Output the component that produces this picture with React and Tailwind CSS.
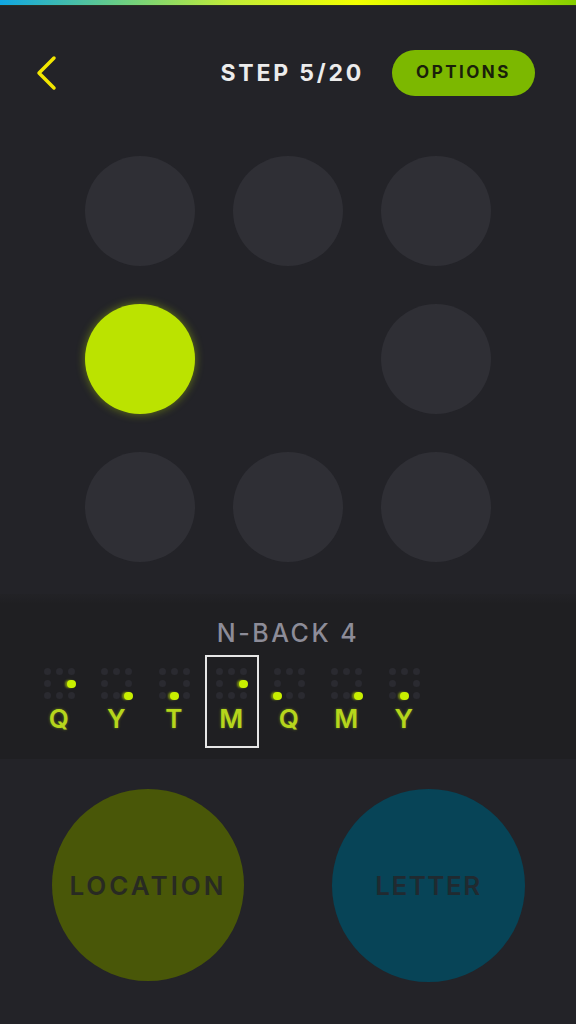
import React from "react";

const font = { fontFamily: "Inter, 'DejaVu Sans', sans-serif" };

const history = [
  { l: "Q", a: 5 },
  { l: "Y", a: 8 },
  { l: "T", a: 7 },
  { l: "M", a: 5, sel: true },
  { l: "Q", a: 6 },
  { l: "M", a: 8 },
  { l: "Y", a: 7 },
];

function MiniGrid({ active }) {
  return (
    <div className="grid grid-cols-3 gap-[5px] w-[31px]">
      {Array.from({ length: 9 }).map((_, i) => (
        <div key={i} className="w-[7px] h-[7px] flex items-center justify-center">
          {i === 4 ? null : i === active ? (
            <div className="w-[9px] h-[8px] shrink-0 rounded-full bg-[#c8f000] shadow-[-2px_0_2px_rgba(200,240,0,0.5)]" />
          ) : (
            <div className="w-[7px] h-[7px] rounded-full bg-[#2a2a30]" />
          )}
        </div>
      ))}
    </div>
  );
}

export default function App() {
  const cells = [0, 1, 2, 3, 4, 5, 6, 7, 8];
  return (
    <div className="w-[576px] h-[1024px] bg-[#232328] flex flex-col overflow-hidden" style={font}>
      <div className="h-[5px] bg-[linear-gradient(90deg,#10a6e2_0%,#6fd080_22%,#c2ec38_40%,#f2ff00_62%,#c4f000_80%,#86cf00_100%)]" />
      <div className="h-[1px] bg-[#2a2f20]" />
      <div className="mt-[44px] h-[46px] flex items-center pl-[35px] pr-[41px]">
        <svg width="22" height="36" viewBox="0 0 22 36" className="shrink-0">
          <polyline points="19,3 4,18 19,33" fill="none" stroke="#f2e600" strokeWidth="3.5" strokeLinecap="round" strokeLinejoin="round" />
        </svg>
        <div className="flex-1" />
        <div className="text-[23px] font-bold text-[#ececec] tracking-[2.8px] mr-[28px]">STEP 5/20</div>
        <div className="w-[143px] h-[46px] rounded-full bg-[#7cb800] flex items-center justify-center text-[17px] font-bold text-[#1a1f0a] tracking-[2.5px]">
          OPTIONS
        </div>
      </div>

      <div className="mt-[60px] mx-auto grid grid-cols-[110px_110px_110px] gap-[38px]">
        {cells.map((i) =>
          i === 4 ? (
            <div key={i} className="w-[110px] h-[110px]" />
          ) : i === 3 ? (
            <div key={i} className="w-[110px] h-[110px] rounded-full bg-[#bbe300] shadow-[0_0_10px_rgba(187,227,0,0.45)]" />
          ) : (
            <div key={i} className="w-[110px] h-[110px] rounded-full bg-[#2f2f35]" />
          )
        )}
      </div>

      <div className="mt-[32px] h-[165px] bg-[linear-gradient(180deg,#222226_0%,#1f1f22_6%,#1f1f22_100%)] flex flex-col">
        <div className="mt-[24px] text-center text-[25px] font-medium text-[#8d8c98] leading-[30px] tracking-[2.5px]">N-BACK 4</div>
        <div className="mt-[7px] ml-[32px] flex gap-[3.5px]">
          {history.map((h, i) => (
            <div
              key={i}
              className={
                "w-[54px] h-[93px] flex flex-col items-center pt-[11px] border-2 " +
                (h.sel ? "border-[#e6e6e6]" : "border-transparent")
              }
            >
              <MiniGrid active={h.a} />
              <div className="mt-[5px] text-[26px] leading-[30px] font-semibold text-[#b6d61c] tracking-[0.5px] [text-shadow:0_0_3px_rgba(182,214,28,0.45)]">
                {h.l}
              </div>
            </div>
          ))}
        </div>
      </div>

      <div className="mt-[30px] flex pl-[52px] gap-[88px]">
        <div className="w-[192px] h-[192px] rounded-full bg-[#495708] flex items-center justify-center text-[26px] font-semibold text-[#282a22] tracking-[3px]">
          LOCATION
        </div>
        <div className="w-[193px] h-[193px] rounded-full bg-[#074457] flex items-center justify-center text-[26px] font-semibold text-[#202a30] tracking-[1.5px]">
          LETTER
        </div>
      </div>
    </div>
  );
}
